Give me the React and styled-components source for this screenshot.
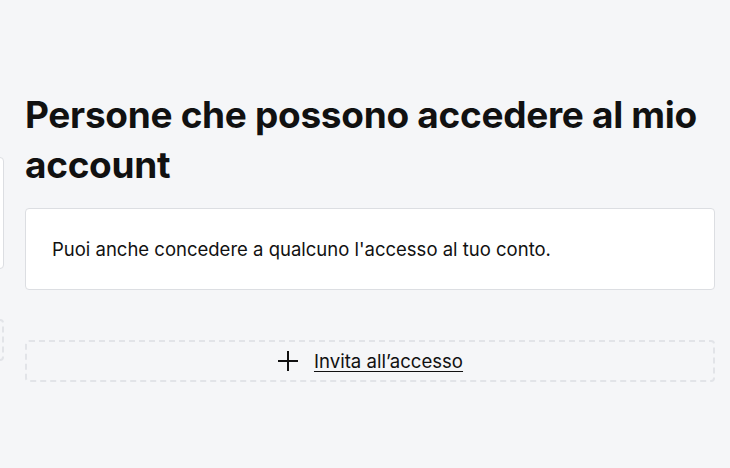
import React from 'react';
import styled, { createGlobalStyle } from 'styled-components';

const GlobalStyle = createGlobalStyle`
  html, body {
    margin: 0;
    padding: 0;
    background: #f5f6f8;
  }
  body {
    font-family: Inter, "Liberation Sans", sans-serif;
    color: #111111;
  }
`

// the first slide sits almost entirely off-screen to the left; only its edges show
const panels = [
  { id: 'prev', ghost: true },
  {
    id: 'current',
    title: 'Persone che possono accedere al mio account',
    text: "Puoi anche concedere a qualcuno l'accesso al tuo conto.",
    action: 'Invita all’accesso',
  },
]

function PlusIcon() {
  return (
    <svg width="22" height="22" viewBox="0 0 22 22" fill="none">
      <path d="M11 1v20M1 11h20" stroke="#111" strokeWidth="2" />
    </svg>
  )
}

export default function App() {
  let slides = panels.map((p) => {
    if (p.ghost) {
      return (
        <Panel key={p.id} aria-hidden="true">
          <TitleSpacer />
          <Card tall />
          <AddBox />
        </Panel>
      )
    }
    return (
      <Panel key={p.id}>
        <Title>{p.title}</Title>
        <Card>
          <CardText>{p.text}</CardText>
        </Card>
        <AddBox>
          <PlusIcon />
          <AddLink href="#">{p.action}</AddLink>
        </AddBox>
      </Panel>
    )
  })

  return (
    <>
      <GlobalStyle />
      <Page>
        <Track>{slides}</Track>
      </Page>
    </>
  );
}

const Page = styled.div`
  width: 730px;
  height: 468px;
  overflow: hidden;
  background: #f5f6f8;
`
const Track = styled.div`
  display: flex;
  gap: 21px;
  margin-left: -686px;
`
const Panel = styled.section`
  flex: 0 0 690px;
  padding-top: 90px;
  display: flex;
  flex-direction: column;
`
const Title = styled.h2`
  margin: 0 0 18px;
  font-size: 37px;
  line-height: 50px;
  font-weight: 700;
  letter-spacing: -0.3px;
  color: #111;
`
const TitleSpacer = styled.div`
  height: 50px;
  margin-bottom: 17px;
`
const Card = styled.div`
  background: #ffffff;
  border: 1px solid #dcdee2;
  border-radius: 4px;
  padding: 28px 26px;
  min-height: ${props => props.tall ? '54px' : '0'};
`
const CardText = styled.p`
  margin: 0;
  font-size: 18.5px;
  line-height: 24px;
  color: #111;
`
const AddBox = styled.div`
  margin-top: 50px;
  height: 38px;
  border: 2px dashed #e2e4e8;
  border-radius: 4px;
  display: flex;
  align-items: center;
  justify-content: center;
  gap: 15px;
`
const AddLink = styled.a`
  font-size: 18.6px;
  color: #111;
  text-decoration: underline;
  text-underline-offset: 3px;
`
